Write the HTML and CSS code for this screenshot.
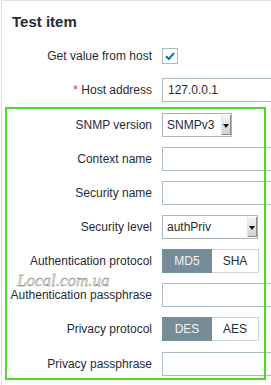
FILE: index.html
```html
<!DOCTYPE html>
<html>
<head>
<meta charset="utf-8">
<link rel="stylesheet" href="styles.css">
</head>
<body>
<div class="panel">
  <h2 class="title">Test item</h2>
  <div class="form">
    <div class="row">
      <label class="lbl">Get value from host</label>
      <div class="ctl">
        <span class="checkbox"><svg width="14" height="14" viewBox="0 0 14 14"><path d="M3 7.2 L5.8 10 L11 4.2" fill="none" stroke="#0275b8" stroke-width="2"/></svg></span>
      </div>
    </div>
    <div class="row">
      <label class="lbl"><span class="req">*</span> Host address</label>
      <div class="ctl"><div class="input">127.0.0.1</div></div>
    </div>
    <div class="row row-shift">
      <label class="lbl">SNMP version</label>
      <div class="ctl"><div class="select select-short"><span class="val">SNMPv3</span><span class="arrow"></span></div></div>
    </div>
    <div class="row">
      <label class="lbl">Context name</label>
      <div class="ctl"><div class="input"></div></div>
    </div>
    <div class="row">
      <label class="lbl">Security name</label>
      <div class="ctl"><div class="input"></div></div>
    </div>
    <div class="row">
      <label class="lbl">Security level</label>
      <div class="ctl"><div class="select select-long"><span class="val">authPriv</span><span class="arrow"></span></div></div>
    </div>
    <div class="row">
      <label class="lbl">Authentication protocol</label>
      <div class="ctl"><div class="seg"><span class="seg-btn seg-first on">MD5</span><span class="seg-btn seg-second">SHA</span></div></div>
    </div>
    <div class="row">
      <label class="lbl">Authentication passphrase</label>
      <div class="ctl"><div class="input"></div></div>
    </div>
    <div class="row">
      <label class="lbl">Privacy protocol</label>
      <div class="ctl"><div class="seg"><span class="seg-btn seg-first on">DES</span><span class="seg-btn seg-second">AES</span></div></div>
    </div>
    <div class="row row-shift">
      <label class="lbl">Privacy passphrase</label>
      <div class="ctl"><div class="input"></div></div>
    </div>
  </div>
</div>
<div class="highlight"></div>
<div class="watermark">Local.com.ua</div>
</body>
</html>
```
FILE: styles.css
```css
html, body {
  margin: 0;
  padding: 0;
  overflow: hidden;
  background: #ffffff;
}
body {
  position: relative;
  width: 271px;
  height: 385px;
  font-family: "Liberation Sans", Arial, sans-serif;
  font-size: 12px;
  color: #1f2c33;
}
.panel {
  margin-left: 1px;
  border-top: 1px solid #dfe4e7;
  border-left: 1px solid #dfe4e7;
  height: 384px;
  overflow: hidden;
}
.title {
  margin: 12px 0 0 0;
  padding-left: 10px;
  font-size: 15px;
  line-height: 18px;
  font-weight: bold;
  color: #1f2c33;
}
.form {
  margin-top: 13px;
  display: flex;
  flex-direction: column;
  gap: 10px;
}
.row {
  display: grid;
  grid-template-columns: 150px 1fr;
  column-gap: 10px;
  align-items: center;
  height: 24px;
}
.row-shift {
  margin-top: 1px;
}
.lbl {
  text-align: right;
  white-space: nowrap;
  line-height: 14px;
}
.req {
  color: #e33734;
}
.ctl {
  display: flex;
  align-items: center;
  height: 24px;
}
.checkbox {
  box-sizing: border-box;
  width: 16px;
  height: 16px;
  border: 1px solid #acbbc2;
  background: #fff;
  display: flex;
  align-items: center;
  justify-content: center;
}
.input {
  box-sizing: border-box;
  width: 200px;
  flex: none;
  height: 24px;
  border: 1px solid #acbbc2;
  padding: 0 5px;
  line-height: 22px;
  font-size: 12px;
  color: #1f2c33;
  background: #fff;
}
.select {
  box-sizing: border-box;
  height: 24px;
  border: 1px solid #a9b5bb;
  display: flex;
  align-items: stretch;
  background: #fff;
}
.select-short { width: 70px; }
.select-long { width: 96px; }
.val {
  flex: 1;
  padding-left: 4px;
  line-height: 22px;
}
.arrow {
  box-sizing: border-box;
  width: 10px;
  margin: 1px 0 1px 0;
  background: linear-gradient(#f4f4f4, #d2d2d2);
  border-right: 1px solid #8d8d8d;
  border-bottom: 1px solid #8d8d8d;
  border-left: 1px solid #e6e6e6;
  position: relative;
}
.arrow::after {
  content: "";
  position: absolute;
  left: 1px;
  top: 9px;
  border-left: 3px solid transparent;
  border-right: 3px solid transparent;
  border-top: 4px solid #111;
}
.seg {
  display: flex;
  height: 24px;
}
.seg-btn {
  box-sizing: border-box;
  height: 24px;
  line-height: 22px;
  text-align: center;
  border: 1px solid #cfd6da;
  background: #fff;
  color: #1f2c33;
  font-size: 12px;
}
.seg-first { width: 50px; }
.seg-second { width: 47px; border-left: none; }
.seg-btn.on {
  background: #768d99;
  border-color: #768d99;
  color: #f0f3f5;
}
.highlight {
  position: absolute;
  left: 5px;
  top: 107px;
  width: 261px;
  height: 273px;
  box-sizing: border-box;
  border: 2px solid #4fd92c;
  pointer-events: none;
}
.watermark {
  position: absolute;
  left: 17px;
  top: 271px;
  font-family: "Liberation Serif", "Times New Roman", serif;
  font-style: italic;
  font-size: 17px;
  line-height: 20px;
  color: #ececec;
  -webkit-text-stroke: 0.4px #7a7a7a;
}
```
